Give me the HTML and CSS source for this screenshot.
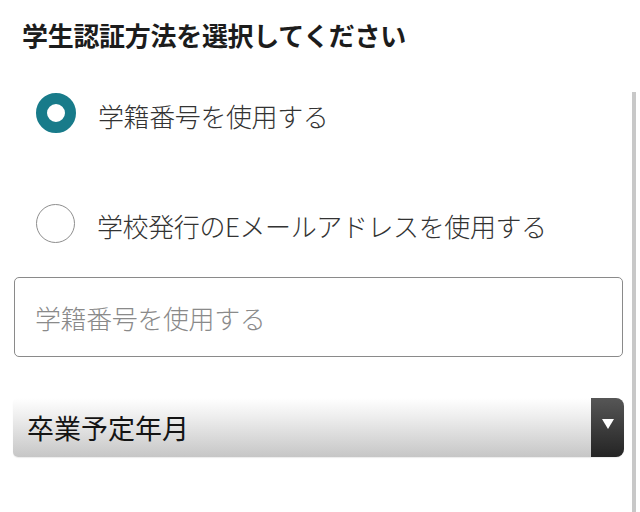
FILE: index.html
```html
<!DOCTYPE html>
<html lang="ja">
<head>
<meta charset="utf-8">
<title>学生認証</title>
<link rel="stylesheet" href="styles.css">
</head>
<body>
<div class="page">
  <main class="content">
    <h1 class="title">学生認証方法を選択してください</h1>
    <div class="options">
      <div class="option">
        <span class="radio radio-on"></span>
        <span class="option-label">学籍番号を使用する</span>
      </div>
      <div class="option">
        <span class="radio"></span>
        <span class="option-label">学校発行のEメールアドレスを使用する</span>
      </div>
    </div>
    <div class="field">
      <span class="placeholder">学籍番号を使用する</span>
    </div>
    <div class="select">
      <span class="select-text">卒業予定年月</span>
      <span class="select-arrow"><span class="tri"></span></span>
    </div>
  </main>
  <div class="scrollbar"></div>
</div>
</body>
</html>
```
FILE: styles.css
```css
html, body {
  margin: 0;
  padding: 0;
  background: #ffffff;
}
body {
  font-family: "Noto Sans CJK JP", "Noto Sans", sans-serif;
  width: 640px;
  height: 512px;
  overflow: hidden;
}
.page {
  display: flex;
  height: 512px;
}
.content {
  flex: 1;
  display: flex;
  flex-direction: column;
  padding: 0 8px 0 14px;
}
.title {
  margin: 17px 0 0 8px;
  height: 36px;
  line-height: 36px;
  font-size: 26px;
  font-weight: 700;
  color: #1c1c1c;
  letter-spacing: -0.3px;
}
.options {
  display: flex;
  flex-direction: column;
  gap: 70px;
  margin-top: 40px;
  padding-left: 22px;
}
.option {
  display: flex;
  align-items: center;
  height: 40px;
  gap: 22px;
}
.radio {
  box-sizing: border-box;
  width: 39px;
  height: 39px;
  border-radius: 50%;
  border: 1.5px solid #8e8e8e;
  background: #fff;
  flex: none;
}
.radio-on {
  width: 40px;
  height: 40px;
  border: 11px solid #187b8a;
}
.option-label {
  font-size: 26px;
  font-weight: 300;
  line-height: 36px;
  padding-top: 6px;
  color: #333333;
  letter-spacing: -0.4px;
}
.field {
  box-sizing: border-box;
  margin-top: 34px;
  height: 80px;
  width: 609px;
  border: 1.5px solid #8a8a8a;
  border-radius: 5px;
  display: flex;
  align-items: center;
  padding: 0 0 0 20px;
}
.placeholder {
  font-size: 26px;
  font-weight: 300;
  color: #8a8a8a;
  letter-spacing: -0.4px;
}
.select {
  margin: 41px 0 0 -1px;
  width: 611px;
  height: 59px;
  display: flex;
  border-radius: 5px 8px 8px 5px;
  background: linear-gradient(#ffffff 0%, #ececec 35%, #c6c6c6 100%);
  overflow: hidden;
  box-shadow: 0 1px 1px rgba(0,0,0,0.08);
}
.select-text {
  flex: 1;
  display: flex;
  align-items: center;
  padding-left: 14px;
  font-size: 27px;
  color: #141414;
}
.select-arrow {
  width: 33px;
  background: linear-gradient(#565656, #242424);
  display: flex;
  justify-content: center;
  padding-top: 21px;
  box-sizing: border-box;
}
.tri {
  width: 0;
  height: 0;
  border-left: 6px solid transparent;
  border-right: 6px solid transparent;
  border-top: 10px solid #ffffff;
}
.scrollbar {
  width: 5px;
  margin: 92px 4px 0 0;
  background: #c8c8c8;
}
```
